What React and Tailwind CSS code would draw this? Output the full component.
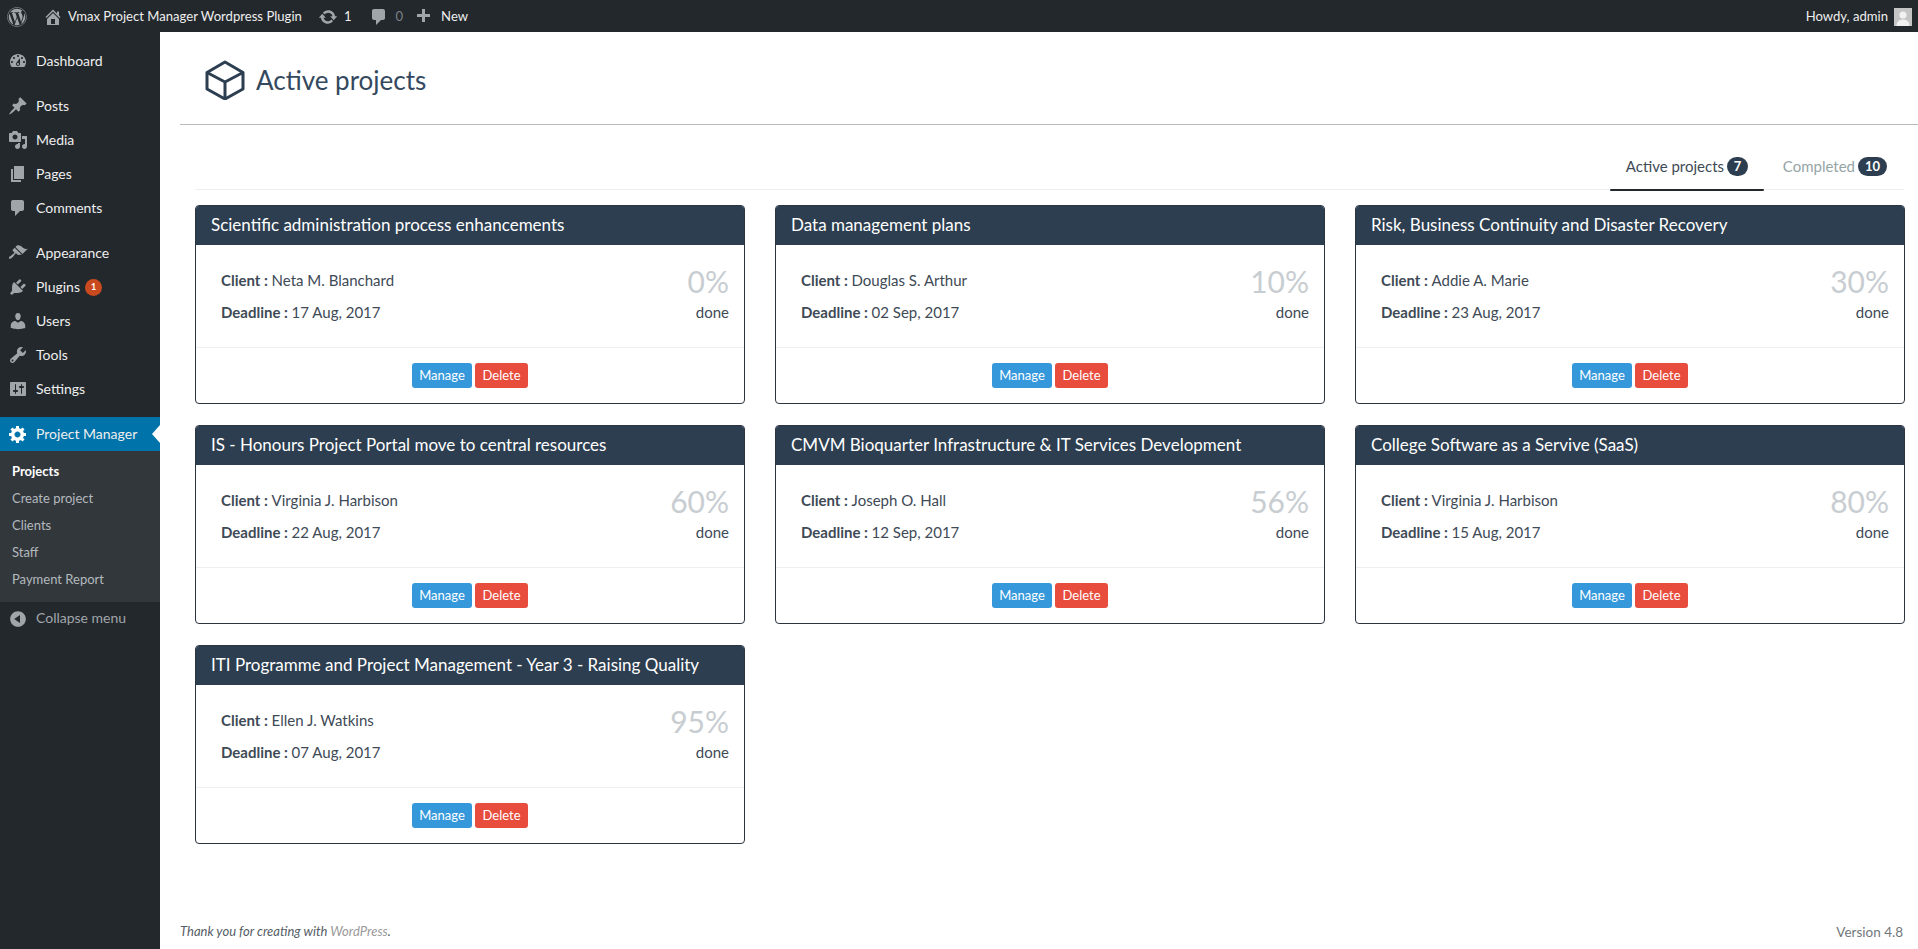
import React from "react";
import { FaWordpress } from "react-icons/fa";

const P = {
  dashboard: "M3.76 16h12.48c1.1-1.37 1.76-3.11 1.76-5 0-4.42-3.58-8-8-8s-8 3.58-8 8c0 1.89.66 3.63 1.76 5zM10 4c.55 0 1 .45 1 1s-.45 1-1 1-1-.45-1-1 .45-1 1-1zM6 6c.55 0 1 .45 1 1s-.45 1-1 1-1-.45-1-1 .45-1 1-1zm8 0c.55 0 1 .45 1 1s-.45 1-1 1-1-.45-1-1 .45-1 1-1zm-5.37 5.55L12 7v6c0 1.1-.9 2-2 2s-2-.9-2-2c0-.57.24-1.08.63-1.45zM4 10c.55 0 1 .45 1 1s-.45 1-1 1-1-.45-1-1 .45-1 1-1zm12 0c.55 0 1 .45 1 1s-.45 1-1 1-1-.45-1-1 .45-1 1-1zm-5 3c0-.55-.45-1-1-1s-1 .45-1 1 .45 1 1 1 1-.45 1-1z",
  post: "M10.44 3.02l1.82-1.82 6.36 6.35-1.83 1.82c-1.05-.68-2.48-.57-3.41.36l-.75.75c-.92.93-1.04 2.35-.35 3.41l-1.83 1.82-2.41-2.41-2.8 2.79c-.42.42-3.38 2.71-3.8 2.29s1.86-3.39 2.28-3.81l2.79-2.79L4.1 9.36l1.83-1.82c1.05.69 2.48.57 3.4-.36l.75-.75c.93-.92 1.05-2.35.36-3.41z",
  media: "M13 11V4c0-.55-.45-1-1-1h-1.67L9 1H5L3.67 3H2c-.55 0-1 .45-1 1v7c0 .55.45 1 1 1h10c.55 0 1-.45 1-1zM7 4.5c1.38 0 2.5 1.12 2.5 2.5S8.38 9.5 7 9.5 4.5 8.38 4.5 7 5.62 4.5 7 4.5zM14 6h5v10.5c0 1.38-1.12 2.5-2.5 2.5S14 17.88 14 16.5s1.12-2.5 2.5-2.5c.17 0 .34.02.5.05V9h-3V6zm-4 8.05V13h2v3.5c0 1.38-1.12 2.5-2.5 2.5S7 17.88 7 16.5 8.12 14 9.5 14c.17 0 .34.02.5.05z",
  page: "M6 15V2h10v13H6zm-1 1h8v2H3V5h2v11z",
  comment: "M5 2h9c1.1 0 2 .9 2 2v7c0 1.1-.9 2-2 2h-2l-5 5v-5H5c-1.1 0-2-.9-2-2V4c0-1.1.9-2 2-2z",
  appearance: "M14.48 11.06L7.41 3.99l1.5-1.5c.5-.56 2.3-.47 3.51.32 1.21.8 1.43 1.28 2.91 2.1 1.18.64 2.45 1.26 4.45.85zm-.71.71L6.7 4.7 4.93 6.47c-.39.39-.39 1.02 0 1.41l1.06 1.06c.39.39.39 1.03 0 1.42-.6.6-1.43 1.11-2.21 1.69-.35.26-.7.53-1.01.84C1.43 13.23.4 14.84 1.12 15.56c.71.71 2.32-.31 3.65-1.65.31-.31.58-.66.85-1.01.57-.78 1.08-1.61 1.69-2.21.39-.39 1.02-.39 1.41 0l1.06 1.06c.39.39 1.02.39 1.41 0z",
  plugins: "M13.11 4.36L9.87 7.6 8 5.73l3.24-3.24c.35-.34 1.05-.2 1.56.32.52.51.66 1.21.31 1.55zm-8 1.77l.91-1.12 9.01 9.01-1.19.84c-.71.71-2.63 1.16-3.82 1.16H6.14L4.9 17.26c-.59.59-1.54.59-2.12 0-.59-.58-.59-1.53 0-2.12l1.24-1.24v-3.88c0-1.13.4-3.19 1.09-3.89zm7.26 3.97l3.24-3.24c.34-.35 1.04-.21 1.55.31.52.51.66 1.21.31 1.55l-3.24 3.25z",
  users: "M10 9.25c-2.27 0-2.73-3.44-2.73-3.44C7 4.02 7.82 2 9.97 2c2.16 0 2.98 2.02 2.71 3.81 0 0-.41 3.44-2.68 3.44zm0 2.57L12.72 10c2.39 0 4.52 2.33 4.52 4.53v2.49s-3.65 1.13-7.24 1.13c-3.65 0-7.24-1.13-7.24-1.13v-2.49c0-2.25 1.94-4.48 4.47-4.48z",
  tools: "M16.68 9.77c-1.34 1.34-3.3 1.67-4.95.99l-5.41 6.52c-.99.99-2.59.99-3.58 0s-.99-2.59 0-3.57l6.52-5.42c-.68-1.65-.35-3.61.99-4.95 1.28-1.28 3.12-1.62 4.72-1.06l-2.89 2.89 2.82 2.82 2.86-2.87c.53 1.58.18 3.39-1.08 4.65zM3.81 16.21c.4.39 1.04.39 1.43 0 .4-.4.4-1.04 0-1.43-.39-.4-1.03-.4-1.43 0-.39.39-.39 1.03 0 1.43z",
  settings: "M18 16V4c0-.55-.45-1-1-1H3c-.55 0-1 .45-1 1v12c0 .55.45 1 1 1h14c.55 0 1-.45 1-1zM8 11h1c.55 0 1 .45 1 1s-.45 1-1 1H8v1.5c0 .28-.22.5-.5.5s-.5-.22-.5-.5V13H6c-.55 0-1-.45-1-1s.45-1 1-1h1V5.5c0-.28.22-.5.5-.5s.5.22.5.5V11zm5-2h-1c-.55 0-1-.45-1-1s.45-1 1-1h1V5.5c0-.28.22-.5.5-.5s.5.22.5.5V7h1c.55 0 1 .45 1 1s-.45 1-1 1h-1v5.5c0 .28-.22.5-.5.5s-.5-.22-.5-.5V9z",
  gear: "M18 12h-2.18c-.17.7-.44 1.35-.81 1.93l1.54 1.54-2.1 2.1-1.54-1.54c-.58.36-1.23.63-1.91.79V19H8v-2.18c-.68-.16-1.33-.43-1.91-.79l-1.54 1.54-2.12-2.12 1.54-1.54c-.36-.58-.63-1.23-.79-1.91H1V9.03h2.17c.16-.7.44-1.35.8-1.94L2.43 5.55l2.1-2.1 1.54 1.54c.58-.37 1.24-.64 1.93-.81V2h3v2.18c.68.16 1.33.43 1.91.79l1.54-1.54 2.12 2.12-1.54 1.54c.36.59.64 1.24.8 1.94H18V12zm-8.5 1.5c1.66 0 3-1.34 3-3s-1.34-3-3-3-3 1.34-3 3 1.34 3 3 3z",
  collapse: "M10 2.16c4.33 0 7.84 3.51 7.84 7.84s-3.51 7.84-7.84 7.84S2.16 14.33 2.16 10 5.71 2.16 10 2.16zm2 11.72V6.12L6.18 9.97z",
  home: "M16 8.5l1.53 1.53-1.06 1.06L10 4.62l-6.47 6.47-1.06-1.06L10 2.5l4 4v-2h2v4zm-6-2.46l6 5.99V18H4v-5.97zM12 17v-5H8v5h4z",
  update: "M10.2 3.28c3.53 0 6.43 2.61 6.92 6h2.08l-3.5 4-3.5-4h2.32c-.45-1.97-2.21-3.45-4.32-3.45-1.45 0-2.73.71-3.54 1.78L4.95 5.66C6.23 4.2 8.11 3.28 10.2 3.28zm-.4 13.44c-3.52 0-6.43-2.61-6.92-6H.8l3.5-4c1.17 1.33 2.33 2.67 3.5 4H5.48c.45 1.97 2.21 3.45 4.32 3.45 1.45 0 2.73-.71 3.54-1.78l1.71 1.95c-1.28 1.46-3.15 2.38-5.25 2.38z",
  plus: "M17 7v3h-5v5H9v-5H4V7h5V2h3v5h5z",
};

function Dash({ name, className }) {
  return (
    <svg viewBox="0 0 20 20" fill="currentColor" className={className} aria-hidden="true">
      <path d={P[name]} fillRule="evenodd" />
    </svg>
  );
}

function MenuItem({ icon, label, badge, iconClass }) {
  return (
    <div className="flex h-[34px] items-center">
      <div className="flex w-9 shrink-0 justify-center pr-[1px]">
        <Dash name={icon} className={iconClass || "h-5 w-5 text-[#a0a5aa]"} />
      </div>
      <span className="pb-[2px] text-[14px] text-[#eeeeee]">{label}</span>
      {badge && (
        <span className="ml-[5px] flex h-[17px] w-[17px] items-center justify-center rounded-full bg-[#ca4a1f] text-[9px] font-bold text-white">
          {badge}
        </span>
      )}
    </div>
  );
}

function Sidebar() {
  return (
    <aside className="flex w-40 shrink-0 flex-col bg-[#23282d] pt-3 font-['Lato',sans-serif]">
      <MenuItem icon="dashboard" label="Dashboard" />
      <div className="h-[11px]" />
      <MenuItem icon="post" label="Posts" />
      <MenuItem icon="media" label="Media" />
      <MenuItem icon="page" label="Pages" />
      <MenuItem icon="comment" label="Comments" />
      <div className="h-[11px]" />
      <MenuItem icon="appearance" label="Appearance" />
      <MenuItem icon="plugins" label="Plugins" badge="1" />
      <MenuItem icon="users" label="Users" />
      <MenuItem icon="tools" label="Tools" />
      <MenuItem icon="settings" label="Settings" />
      <div className="h-[11px]" />
      <div className="relative bg-[#0073aa]">
        <MenuItem icon="gear" label="Project Manager" iconClass="h-5 w-5 text-white" />
        <span className="absolute right-0 top-[8px] h-0 w-0 border-y-[9px] border-r-[8px] border-y-transparent border-r-white" />
      </div>
      <div className="flex flex-col bg-[#32373c] pb-[9px] pl-3 pt-[7px] text-[13px] text-[#b4b9be]">
        <span className="flex h-[27px] items-center font-bold text-white">Projects</span>
        <span className="flex h-[27px] items-center">Create project</span>
        <span className="flex h-[27px] items-center">Clients</span>
        <span className="flex h-[27px] items-center">Staff</span>
        <span className="flex h-[27px] items-center">Payment Report</span>
      </div>
      <div className="flex h-[34px] items-center text-[#a0a5aa]">
        <div className="flex w-9 shrink-0 justify-center pr-[1px]">
          <Dash name="collapse" className="h-5 w-5" />
        </div>
        <span className="pb-[3px] text-[14px]">Collapse menu</span>
      </div>
    </aside>
  );
}

function TopBar() {
  return (
    <header className="flex h-8 shrink-0 items-center justify-between bg-[#23282d] pt-[2px] text-[13.1px] text-[#eeeeee] font-['Lato',sans-serif]">
      <div className="flex items-center">
        <FaWordpress className="ml-[7px] h-5 w-5 text-[#a0a5aa]" />
        <Dash name="home" className="ml-[16px] h-5 w-5 text-[#a0a5aa]" />
        <span className="ml-[5px] pb-[1px]">Vmax Project Manager Wordpress Plugin</span>
        <Dash name="update" className="ml-[16px] h-5 w-5 text-[#a0a5aa]" />
        <span className="ml-[6px] pb-[1px]">1</span>
        <Dash name="comment" className="ml-[18px] h-5 w-5 text-[#a0a5aa]" />
        <span className="ml-[6px] pb-[1px] text-[#7d8186]">0</span>
        <Dash name="plus" className="ml-[10px] h-5 w-5 text-[#a0a5aa]" />
        <span className="ml-[8px] pb-[1px]">New</span>
      </div>
      <div className="flex items-center pr-[6px]">
        <span className="pb-[1px]">Howdy, admin</span>
        <svg viewBox="0 0 18 18" className="ml-[6px] h-[18px] w-[18px]" aria-hidden="true">
          <rect width="18" height="18" fill="#c4c4c4" />
          <circle cx="9" cy="7" r="3.6" fill="#f1f1f1" />
          <path d="M2.500 18c0-4.500 3-6.500 6.500-6.500s6.500 2 6.500 6.500z" fill="#f1f1f1" />
        </svg>
      </div>
    </header>
  );
}

function Card({ title, client, deadline, pct }) {
  return (
    <article className="flex h-[199px] flex-col overflow-hidden rounded-[4px] border border-[#2c3440] bg-white">
      <h2 className="flex h-[39px] shrink-0 items-center bg-[#2c3e50] pb-[2px] pl-[15px] text-[17px] text-white">{title}</h2>
      <div className="flex h-[102px] shrink-0 items-start justify-between pl-[25px] pr-[15px] pt-[19px] text-[15px] text-[#3e4a56]">
        <div className="flex flex-col">
          <p className="flex h-[32px] items-center whitespace-pre"><b>Client : </b>{client}</p>
          <p className="flex h-[32px] items-center whitespace-pre"><b>Deadline : </b>{deadline}</p>
        </div>
        <div className="mt-[-2px] flex flex-col items-end">
          <span className="text-[30px] leading-[38px] text-[#c8cdd1]">{pct}</span>
          <span className="mt-[2px] leading-[20px]">done</span>
        </div>
      </div>
      <div className="flex flex-1 justify-center gap-[3px] border-t border-[#eeeeee] pt-[15px]">
        <button className="h-[25px] w-[60px] rounded-[3px] bg-[#3498db] text-[13px] text-white">Manage</button>
        <button className="h-[25px] w-[53px] rounded-[3px] bg-[#e74c3c] text-[13px] text-white">Delete</button>
      </div>
    </article>
  );
}

const projects = [
  ["Scientific administration process enhancements", "Neta M. Blanchard", "17 Aug, 2017", "0%"],
  ["Data management plans", "Douglas S. Arthur", "02 Sep, 2017", "10%"],
  ["Risk, Business Continuity and Disaster Recovery", "Addie A. Marie", "23 Aug, 2017", "30%"],
  ["IS - Honours Project Portal move to central resources", "Virginia J. Harbison", "22 Aug, 2017", "60%"],
  ["CMVM Bioquarter Infrastructure & IT Services Development", "Joseph O. Hall", "12 Sep, 2017", "56%"],
  ["College Software as a Servive (SaaS)", "Virginia J. Harbison", "15 Aug, 2017", "80%"],
  ["ITI Programme and Project Management - Year 3 - Raising Quality", "Ellen J. Watkins", "07 Aug, 2017", "95%"],
];

function Main() {
  return (
    <main className="flex min-w-0 flex-1 flex-col bg-white font-['Lato',sans-serif]">
      <div className="ml-5 flex h-[93px] shrink-0 items-center border-b border-[#bbbbbb] pl-[25px] pt-[4px]">
        <svg viewBox="0 0 40 40" className="h-10 w-10 text-[#2c3e50]" fill="none" stroke="currentColor" strokeWidth="3" strokeLinejoin="round" aria-hidden="true">
          <path d="M20 2 38 12.500V29L20 39 2 29V12.500Z" />
          <path d="M2 12.500 20 22 38 12.500M20 22V39" />
        </svg>
        <h1 className="ml-[11px] text-[26px] text-[#34495e]">Active projects</h1>
      </div>
      <div className="ml-[35px] mr-[14px] mt-[29px] flex h-[36px] shrink-0 items-start justify-end border-b border-[#eeeeee] text-[15px]">
        <div className="relative h-[36px] w-[154px] pl-[16px] pt-[1px] text-[#3e4a56]">
          <span className="flex items-center">
            Active projects
            <span className="ml-[3px] flex h-[19px] w-[21px] items-center justify-center rounded-full bg-[#2c3e50] text-[13px] font-bold text-white">7</span>
          </span>
          <span className="absolute bottom-[-1px] left-0 h-[2px] w-full rounded-sm bg-[#23282d]" />
        </div>
        <div className="ml-[19px] mr-[17px] flex items-center pt-[1px] text-[#95a5a6]">
          Completed
          <span className="ml-[3px] flex h-[19px] w-[29px] items-center justify-center rounded-full bg-[#2c3e50] text-[13px] font-bold text-white">10</span>
        </div>
      </div>
      <div className="ml-[35px] mr-[13px] mt-[15px] grid grid-cols-[550px_550px_550px] gap-x-[30px] gap-y-[21px]">
        {projects.map((p) => (
          <Card key={p[0]} title={p[0]} client={p[1]} deadline={p[2]} pct={p[3]} />
        ))}
      </div>
      <footer className="mt-auto ml-5 mr-[15px] flex h-[27px] items-start justify-between text-[13px] text-[#555d66]">
        <p className="italic">Thank you for creating with <span className="text-[#999999]">WordPress</span>.</p>
        <p className="text-[13.500px] leading-[20px] text-[#72777c]">Version 4.8</p>
      </footer>
    </main>
  );
}

export default function App() {
  return (
    <div className="flex h-[949px] w-[1918px] flex-col overflow-hidden">
      <TopBar />
      <div className="flex min-h-0 flex-1">
        <Sidebar />
        <Main />
      </div>
    </div>
  );
}
